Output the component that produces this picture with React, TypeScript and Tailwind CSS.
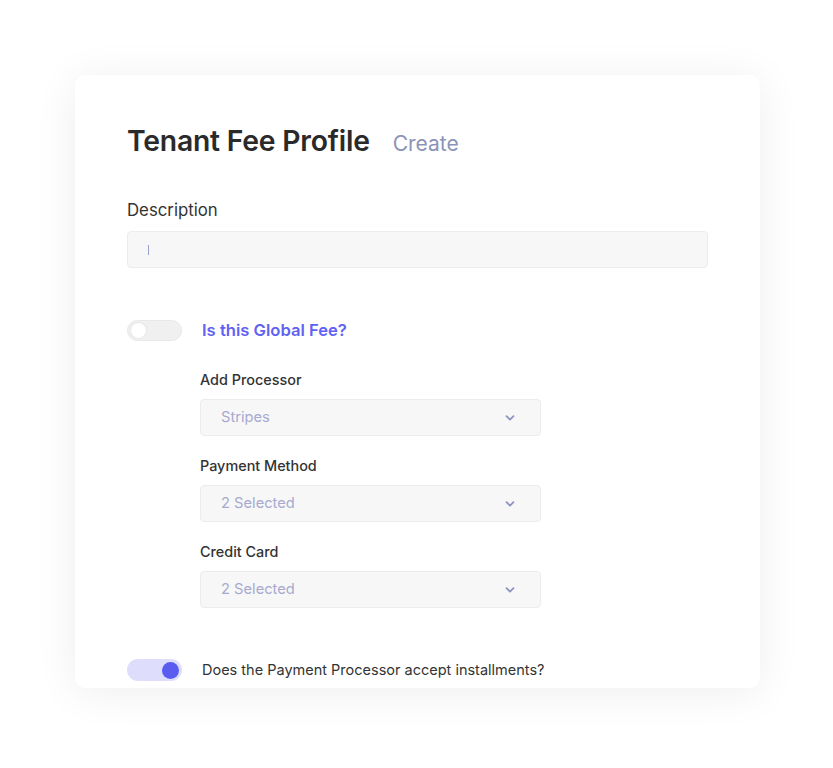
import React from "react";

function Chevron() {
  return (
    <svg width="10" height="6" viewBox="0 0 10 6" fill="none">
      <path d="M1.5 1.2 L5 4.6 L8.5 1.2" stroke="#8e93c2" strokeWidth="1.8" strokeLinecap="round" strokeLinejoin="round" />
    </svg>
  );
}

function Select({ value }: { value: string }) {
  return (
    <div className="mt-[9px] flex h-[37px] w-[341px] items-center justify-between rounded-[4px] border border-[#ececec] bg-[#f7f7f7] pl-[20px] pr-[25px]">
      <span className="text-[14.7px] text-[#a6aad0]">{value}</span>
      <Chevron />
    </div>
  );
}

export default function App() {
  return (
    <div className="min-h-[768px] bg-white pl-[75px] pt-[75px]" style={{ fontFamily: "Inter, 'Noto Sans', sans-serif" }}>
      <div className="h-[613px] w-[685px] overflow-hidden rounded-[10px] bg-white px-[52px] pt-[45px] shadow-[0_4px_44px_rgba(0,0,0,0.07)]">
        <div className="flex h-[37px] items-baseline gap-[23px]">
          <h1 className="text-[28.3px] font-semibold tracking-[-0.2px] text-[#2a2a2a]">Tenant Fee Profile</h1>
          <span className="text-[21px] text-[#8b93b8]">Create</span>
        </div>

        <div className="mt-[41px] text-[16.8px] leading-[24px] text-[#333333]">Description</div>
        <div className="mt-[9px] flex h-[37px] w-[581px] items-center rounded-[4px] border border-[#ececec] bg-[#f7f7f7] pl-[20px]">
          <div className="h-[10px] w-px bg-[#9aa0c8]" />
        </div>

        <div className="mt-[50px] flex h-[24px] items-center gap-[20px]">
          <div className="flex h-[21px] w-[55px] items-center rounded-full border border-[#e8e8e8] bg-[#f0f0f0] px-[2px]">
            <div className="h-[17px] w-[17px] rounded-full border border-[#e6e6e6] bg-white" />
          </div>
          <span className="text-[16.6px] font-semibold text-[#5f62f2]">Is this Global Fee?</span>
        </div>

        <div className="pl-[73px]">
          <div className="mt-[28px] text-[14.4px] font-medium leading-[20px] text-[#333333]">Add Processor</div>
          <Select value="Stripes" />
          <div className="mt-[20px] text-[14.4px] font-medium leading-[20px] text-[#333333]">Payment Method</div>
          <Select value="2 Selected" />
          <div className="mt-[20px] text-[14.4px] font-medium leading-[20px] text-[#333333]">Credit Card</div>
          <Select value="2 Selected" />
        </div>

        <div className="mt-[51px] flex h-[22px] items-center gap-[20px]">
          <div className="flex h-[22px] w-[55px] items-center justify-end rounded-full bg-[#dedefc] px-[3px]">
            <div className="h-[17px] w-[17px] rounded-full bg-[#5a5cf0]" />
          </div>
          <span className="text-[14.5px] text-[#333333]">Does the Payment Processor accept installments?</span>
        </div>
      </div>
    </div>
  );
}
